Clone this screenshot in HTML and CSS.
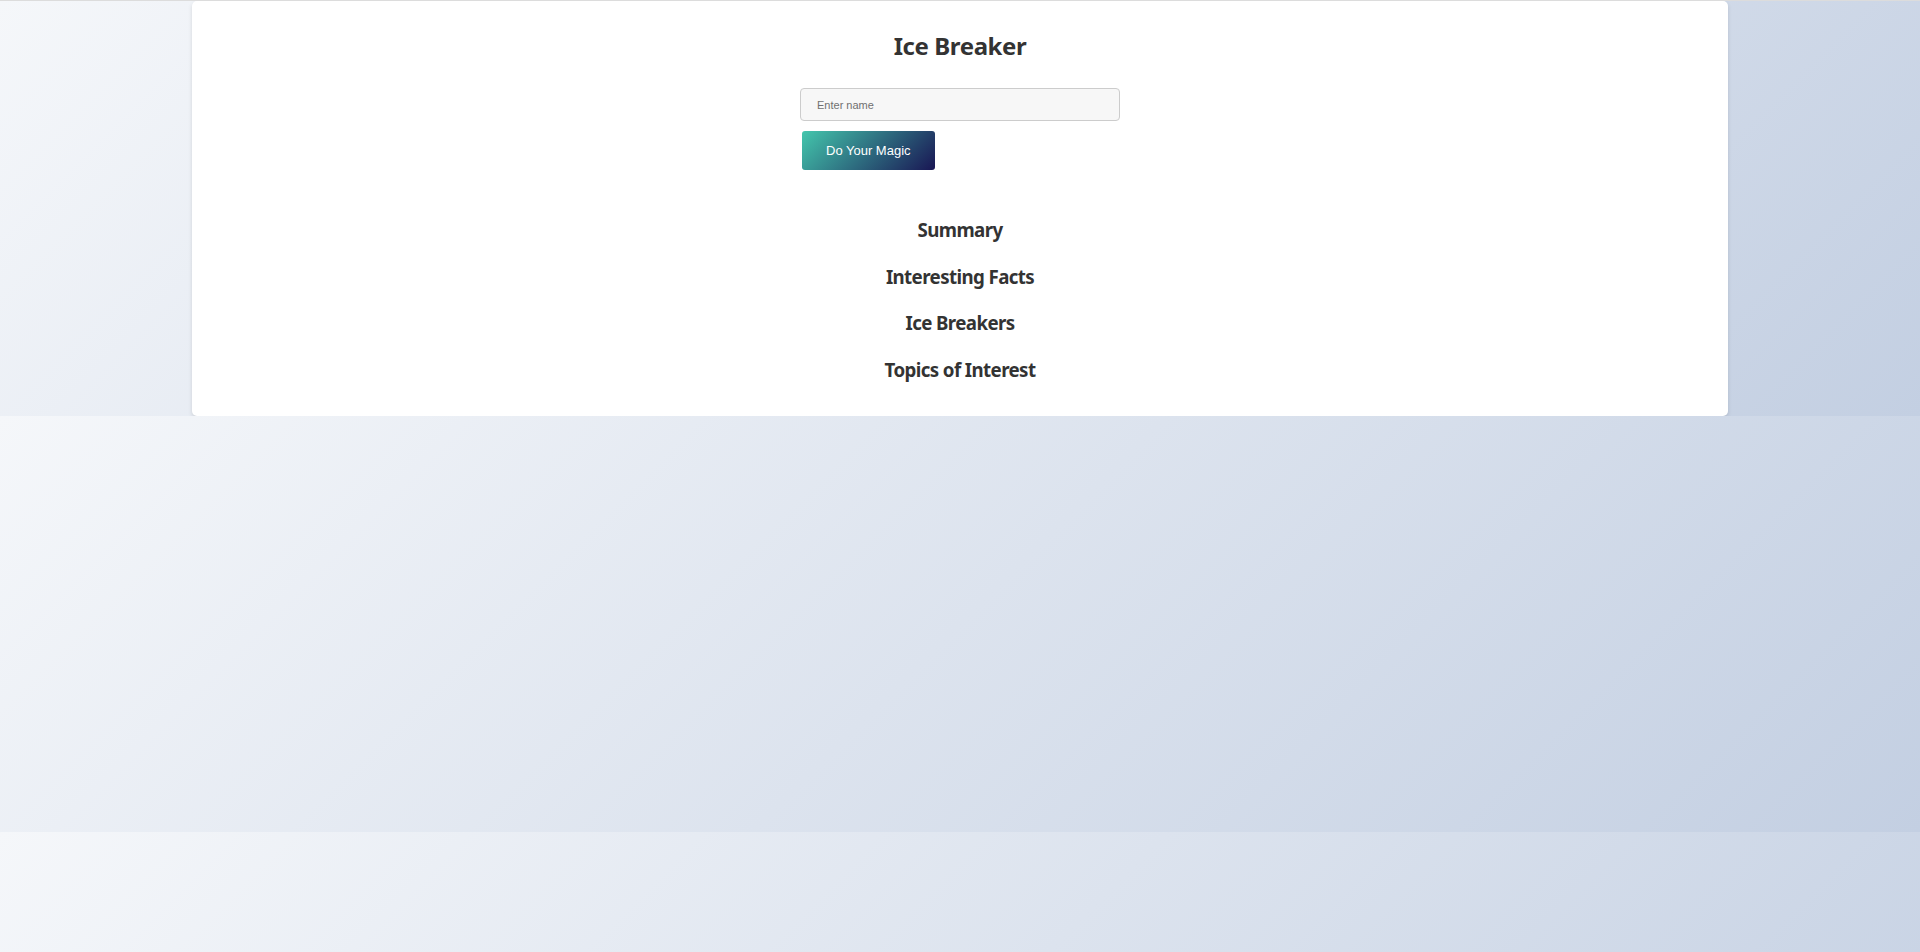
FILE: index.html
```html
<!DOCTYPE html>
<html lang="en">
<head>
<meta charset="utf-8">
<title>Ice Breaker</title>
<link rel="stylesheet" href="styles.css">
</head>
<body>
  <div class="card">
    <h1 class="title">Ice Breaker</h1>
    <form class="form">
      <input class="name-input" type="text" placeholder="Enter name">
      <button class="magic-btn" type="button">Do Your Magic</button>
    </form>
    <div class="sections">
      <h3 class="section-title">Summary</h3>
      <h3 class="section-title">Interesting Facts</h3>
      <h3 class="section-title">Ice Breakers</h3>
      <h3 class="section-title">Topics of Interest</h3>
    </div>
  </div>
</body>
</html>
```

FILE: styles.css
```css
body {
  margin: 0;
  border-top: 1px solid #dcdcdc;
  background: linear-gradient(135deg, #f5f7fa 0%, #c3cfe2 100%);
  font-family: "Noto Sans", "Open Sans", sans-serif;
  color: #333;
}

.card {
  width: 80%;
  margin: 0 auto;
  background: #fff;
  border-radius: 5px;
  box-shadow: 0 2px 4px rgba(0, 0, 0, 0.12);
  padding: 20px 20px 34px;
  box-sizing: border-box;
}

.title {
  margin: 9px 0 26px;
  font-size: 24px;
  line-height: 32px;
  font-weight: 700;
  letter-spacing: -0.4px;
  text-align: center;
  color: #333;
}

.form {
  width: 320px;
  margin: 0 auto;
}

.name-input {
  display: block;
  box-sizing: border-box;
  width: 100%;
  height: 33px;
  margin: 0;
  padding: 0 16px;
  border: 1px solid #cccccc;
  border-radius: 4px;
  background: #f7f7f7;
  font-family: "Liberation Sans", Arial, sans-serif;
  font-size: 11px;
  color: #333;
}

.name-input::placeholder {
  color: #707070;
}

.magic-btn {
  display: block;
  box-sizing: border-box;
  height: 39px;
  margin: 10px 0 0 2px;
  padding: 0 24px;
  border: none;
  border-radius: 3px;
  background: linear-gradient(135deg, #43c6ac 0%, #191654 100%);
  color: #fff;
  font-family: "Liberation Sans", Arial, sans-serif;
  font-size: 13px;
  cursor: pointer;
}

.sections {
  display: flex;
  flex-direction: column;
  gap: 21.67px;
  margin-top: 47px;
}

.section-title {
  margin: 0;
  font-size: 18.72px;
  line-height: 25px;
  font-weight: 700;
  letter-spacing: -0.6px;
  text-align: center;
  color: #333;
}
```
